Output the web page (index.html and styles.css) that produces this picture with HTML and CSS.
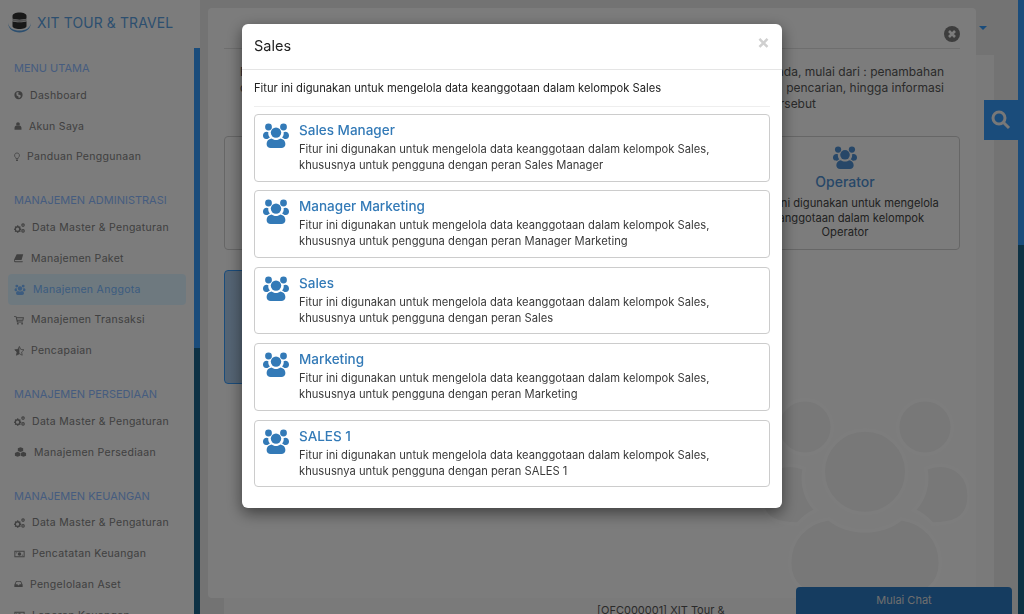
FILE: index.html
```html
<!DOCTYPE html>
<html lang="en">
<head>
    <meta charset="UTF-8">
    <meta name="viewport" content="width=device-width, initial-scale=1.0">
    <title>XIT Tour &amp; Travel</title>
    <link rel="stylesheet" href="styles.css">
</head>
<body>
    <svg class="sprite" width="0" height="0">
        <symbol id="i-users" viewBox="0 0 26 26">
            <circle cx="5.5" cy="5" r="3.4"/>
            <circle cx="20.5" cy="5" r="3.4"/>
            <circle cx="13" cy="10.6" r="5.2"/>
            <path d="M0 13.6c0-2.400 1.600-3.800 3.600-3.800 .7 0 1.300.2 1.800.4-.4 1.700.1 3.900 1.500 5.200-1 .4-1.700 1-2.300 1.700C2.200 17.100 0 16.600 0 13.600z"/>
            <path d="M26 13.600c0-2.400-1.600-3.800-3.600-3.800-.7 0-1.300.2-1.800.4.4 1.700-.1 3.900-1.500 5.200 1 .4 1.700 1 2.300 1.700 2.400-.0 4.600-.5 4.600-3.500z"/>
            <path d="M8.500 16.500c1.100.9 2.800 1.500 4.500 1.500s3.400-.6 4.500-1.500c3 .4 4.900 2.700 4.900 5.500 0 2.500-1.800 4-4 4H7.600c-2.200 0-4-1.500-4-4 0-2.800 1.900-5.100 4.900-5.500z"/>
        </symbol>
        <symbol id="i-globe" viewBox="0 0 12 12">
            <path fill-rule="evenodd" d="M6 .5a5.500 5.500 0 1 0 0 11 5.500 5.500 0 0 0 0-11zM3 3l2.500-1 1 1.200L5 4.500l1.500 1.200 2 .3.5 2-2 2-1-.5V8L3.500 6.500z"/>
        </symbol>
        <symbol id="i-user" viewBox="0 0 12 12">
            <circle cx="6" cy="3" r="2.800"/>
            <path d="M.8 11.800V9c0-2.200 1.400-3.400 3-3.600.6.400 1.400.7 2.200.7s1.600-.3 2.200-.7c1.600.2 3 1.400 3 3.600v2.800z"/>
        </symbol>
        <symbol id="i-bulb" viewBox="0 0 8 12">
            <path fill="none" stroke="currentColor" d="M4 .6a3.300 3.300 0 0 0-2 5.900c.5.500.6 1 .6 1.600h2.800c0-.6.100-1.100.6-1.600A3.300 3.300 0 0 0 4 .6z"/>
            <path d="M2.800 9.200h2.400v2.200H2.800z"/>
        </symbol>
        <symbol id="i-cogs" viewBox="0 0 14 12">
            <path fill-rule="evenodd" d="M4.500 2.500l1 .2.300 1 1 .5.900-.4.800.9-.5.900.4 1 1 .3v1.200l-1 .3-.4 1 .5.900-.8.800-.9-.4-1 .4-.3 1H3.900l-.3-1-1-.4-.9.400-.8-.8.5-.9-.4-1-1-.3V6.900l1-.3.400-1-.5-.9.800-.9.900.4 1-.5.300-1zM4.500 5.500a2 2 0 1 0 0 4 2 2 0 0 0 0-4z"/>
            <path fill-rule="evenodd" d="M11.500 0a2.300 2.300 0 1 0 0 4.600 2.300 2.300 0 0 0 0-4.600zm0 1.400a.9.900 0 1 1 0 1.800.9.900 0 0 1 0-1.800z"/>
            <path fill-rule="evenodd" d="M11.500 7.400a2.300 2.300 0 1 0 0 4.600 2.300 2.300 0 0 0 0-4.600zm0 1.400a.9.900 0 1 1 0 1.800.9.900 0 0 1 0-1.800z"/>
        </symbol>
        <symbol id="i-book" viewBox="0 0 13 12">
            <path d="M3.500 1H12l-2.200 7.600H1.800C1 8.600.8 9.200 1 9.700c.1.400.5.600 1 .6h8.600l.8-.3-.4 1.500H2c-1.200 0-2-.8-2-2 0-.5 0-.9.200-1.400z"/>
        </symbol>
        <symbol id="i-cart" viewBox="0 0 13 12">
            <path fill-rule="evenodd" d="M0 1h3l.4 1.400H13l-1 4.600H4.700l.2 1H11.500v1.200H3.800L2.200 2.200H0zM3.700 3.600l.7 2.200h6.600l.5-2.200z"/>
            <circle cx="5" cy="10.800" r="1.100"/>
            <circle cx="10.500" cy="10.800" r="1.100"/>
        </symbol>
        <symbol id="i-star" viewBox="0 0 13 12">
            <path d="M7 0l1.800 3.900 4.200.5-3.100 2.900.8 4.200L7 9.500 3.200 11.500l.8-4.200L1 4.400l4.200-.5z" fill="none" stroke="currentColor"/>
            <path d="M7 0v9.500L3.200 11.500l.8-4.200L1 4.400l4.200-.5z"/>
        </symbol>
        <symbol id="i-cubes" viewBox="0 0 14 12">
            <path d="M7 .3l3.200 1.300v3.200L7 6.100 3.800 4.800V1.600z"/>
            <path d="M3.500 5.800l3.200 1.300v3.300L3.500 11.700.3 10.400V7.100z"/>
            <path d="M10.500 5.800l3.200 1.300v3.300l-3.200 1.300-3.200-1.300V7.100z"/>
        </symbol>
        <symbol id="i-money" viewBox="0 0 14 12">
            <path fill-rule="evenodd" d="M.5 2h13v8H.5zm1.200 1.200v5.600h10.600V3.200z"/>
            <circle cx="7" cy="6" r="2.200"/>
            <path d="M2.500 4h1.500v1H2.500zM10 7h1.500v1H10z"/>
        </symbol>
        <symbol id="i-inbox" viewBox="0 0 13 12">
            <path fill-rule="evenodd" d="M3 1.500h7L12.500 7v3.500H.5V7zm.8 1.200L2.200 6.500h2.900l.6 1.200h1.600l.6-1.200h2.900L9.200 2.700z"/>
        </symbol>
    </svg>

    <div class="page">
        <aside class="sidebar">
            <div class="brand">
                <svg class="brand-logo" viewBox="0 0 23 21">
                    <path class="brand-arc" d="M0 11c.5 6 5 9.500 11.500 9.500S22.500 17 23 11c-1 5-5 7.500-11.500 7.500S1 16 0 11z"/>
                    <path class="brand-dark" d="M4.500 4c0-2.200 3-3.500 7-3.500s7 1.300 7 3.500v2.500c-2 1.500-12 1.500-14 0z"/>
                    <path class="brand-light" d="M4.500 6.800c2 1.500 12 1.500 14 0v2c-2 1.500-12 1.500-14 0z"/>
                    <path class="brand-dark" d="M4.500 9.200c2 1.500 12 1.500 14 0V14c0 2-3 3-7 3s-7-1-7-3z"/>
                </svg>
                <span class="brand-name">XIT TOUR &amp; TRAVEL</span>
            </div>
            <div class="sidebar-body">
                <nav class="menu">
                    <h4 class="menu-title">MENU UTAMA</h4>
                    <a class="menu-item"><svg class="ic ic-9"><use href="#i-globe"/></svg>Dashboard</a>
                    <a class="menu-item"><svg class="ic ic-8"><use href="#i-user"/></svg>Akun Saya</a>
                    <a class="menu-item"><svg class="ic ic-6"><use href="#i-bulb"/></svg>Panduan Penggunaan</a>

                    <h4 class="menu-title">MANAJEMEN ADMINISTRASI</h4>
                    <a class="menu-item"><svg class="ic ic-11"><use href="#i-cogs"/></svg>Data Master &amp; Pengaturan</a>
                    <a class="menu-item"><svg class="ic ic-10"><use href="#i-book"/></svg>Manajemen Paket</a>
                    <a class="menu-item active"><svg class="ic ic-11"><use href="#i-users"/></svg>Manajemen Anggota</a>
                    <a class="menu-item"><svg class="ic ic-10"><use href="#i-cart"/></svg>Manajemen Transaksi</a>
                    <a class="menu-item"><svg class="ic ic-10"><use href="#i-star"/></svg>Pencapaian</a>

                    <h4 class="menu-title">MANAJEMEN PERSEDIAAN</h4>
                    <a class="menu-item"><svg class="ic ic-11"><use href="#i-cogs"/></svg>Data Master &amp; Pengaturan</a>
                    <a class="menu-item"><svg class="ic ic-13"><use href="#i-cubes"/></svg>Manajemen Persediaan</a>

                    <h4 class="menu-title">MANAJEMEN KEUANGAN</h4>
                    <a class="menu-item"><svg class="ic ic-11"><use href="#i-cogs"/></svg>Data Master &amp; Pengaturan</a>
                    <a class="menu-item"><svg class="ic ic-11"><use href="#i-money"/></svg>Pencatatan Keuangan</a>
                    <a class="menu-item"><svg class="ic ic-9"><use href="#i-inbox"/></svg>Pengelolaan Aset</a>
                    <a class="menu-item"><svg class="ic ic-11"><use href="#i-money"/></svg>Laporan Keuangan</a>
                </nav>
                <div class="strip"></div>
            </div>
        </aside>

        <main class="content">
            <div class="caret-row"><span class="caret"></span></div>
            <section class="back-card">
                <span class="back-label">[OFC000001] XIT Tour &amp;</span>
            </section>
        </main>
        <div class="strip-right"></div>
    </div>

    <section class="panel">
        <header class="panel-head">
            <svg class="panel-close" viewBox="0 0 16 16">
                <circle cx="8" cy="8" r="8"/>
                <path d="M5 5l6 6M11 5l-6 6"/>
            </svg>
        </header>
        <div class="intro">
            <p class="intro-line"><span>F</span><span>ada, mulai dari : penambahan</span></p>
            <p class="intro-line"><span>d</span><span>, pencarian, hingga informasi</span></p>
            <p class="intro-line intro-last"><span></span><span>tersebut</span></p>
        </div>
        <div class="group-grid">
            <div class="group-card"></div>
            <div class="group-card"></div>
            <div class="group-card">
                <svg class="group-icon"><use href="#i-users"/></svg>
                <h3>Operator</h3>
                <p>Fitur ini digunakan untuk mengelola keanggotaan dalam kelompok Operator</p>
            </div>
            <div class="group-card selected"></div>
        </div>
        <svg class="ghost-icon"><use href="#i-users"/></svg>
    </section>

    <button class="search-btn">
        <svg viewBox="0 0 20 20"><circle cx="8" cy="8" r="6"/><path d="M12.500 12.500L18 18"/></svg>
    </button>
    <div class="chat-btn">Mulai Chat</div>

    <div class="overlay">
        <div class="modal">
            <div class="modal-head">
                <h2>Sales</h2>
                <span class="modal-x">×</span>
            </div>
            <div class="modal-body">
                <p class="modal-lead">Fitur ini digunakan untuk mengelola data keanggotaan dalam kelompok Sales</p>
                <div class="role-list">
                    <a class="role">
                        <svg class="role-icon"><use href="#i-users"/></svg>
                        <div>
                            <h3>Sales Manager</h3>
                            <p>Fitur ini digunakan untuk mengelola data keanggotaan dalam kelompok Sales, khususnya untuk pengguna dengan peran Sales Manager</p>
                        </div>
                    </a>
                    <a class="role">
                        <svg class="role-icon"><use href="#i-users"/></svg>
                        <div>
                            <h3>Manager Marketing</h3>
                            <p>Fitur ini digunakan untuk mengelola data keanggotaan dalam kelompok Sales, khususnya untuk pengguna dengan peran Manager Marketing</p>
                        </div>
                    </a>
                    <a class="role">
                        <svg class="role-icon"><use href="#i-users"/></svg>
                        <div>
                            <h3>Sales</h3>
                            <p>Fitur ini digunakan untuk mengelola data keanggotaan dalam kelompok Sales, khususnya untuk pengguna dengan peran Sales</p>
                        </div>
                    </a>
                    <a class="role">
                        <svg class="role-icon"><use href="#i-users"/></svg>
                        <div>
                            <h3>Marketing</h3>
                            <p>Fitur ini digunakan untuk mengelola data keanggotaan dalam kelompok Sales, khususnya untuk pengguna dengan peran Marketing</p>
                        </div>
                    </a>
                    <a class="role">
                        <svg class="role-icon"><use href="#i-users"/></svg>
                        <div>
                            <h3>SALES 1</h3>
                            <p>Fitur ini digunakan untuk mengelola data keanggotaan dalam kelompok Sales, khususnya untuk pengguna dengan peran SALES 1</p>
                        </div>
                    </a>
                </div>
            </div>
        </div>
    </div>
</body>
</html>
```

FILE: styles.css
```css
* {
    box-sizing: border-box;
}
html, body {
    margin: 0;
    height: 614px;
    overflow: hidden;
}
body {
    font-family: Inter, "Open Sans", sans-serif;
    font-size: 11px;
    color: #333;
    background: #e6e6e6;
    position: relative;
}
h2, h3, h4, p {
    margin: 0;
    font-weight: 400;
}
.sprite {
    display: block;
    height: 0;
}
.page {
    display: flex;
    height: 614px;
}

/* sidebar */
.sidebar {
    width: 200px;
    flex: none;
    background: #f8f8f8;
    display: flex;
    flex-direction: column;
}
.brand {
    height: 48px;
    display: flex;
    align-items: center;
    padding: 0 0 3px 8px;
    gap: 6px;
}
.brand-logo {
    width: 23px;
    height: 21px;
}
.brand-arc {
    fill: #5a9fdf;
}
.brand-dark {
    fill: #303030;
}
.brand-light {
    fill: #a0a0a0;
}
.brand-name {
    font-size: 13.9px;
    color: #5a9fdf;
    letter-spacing: 0.15px;
}
.sidebar-body {
    flex: 1;
    display: flex;
    min-height: 0;
}
.menu {
    width: 194px;
    padding: 12px 8px 0;
    overflow: hidden;
}
.strip {
    width: 6px;
    background: linear-gradient(#3598f6 300px, #1a6288 300px);
}
.strip-right {
    width: 6px;
    flex: none;
    background: linear-gradient(#3598f6 245px, #1a6288 245px);
}
.menu-title {
    height: 16px;
    line-height: 16px;
    margin: 20px 0 4px 6px;
    font-size: 11px;
    color: #8cb8ff;
}
.menu-title:first-child {
    margin-top: 0;
}
.menu-item {
    display: flex;
    align-items: center;
    height: 30.75px;
    padding-left: 6px;
    gap: 7px;
    font-size: 10.5px;
    color: #808080;
    fill: #808080;
    border-radius: 4px;
    letter-spacing: 0.3px;
    white-space: nowrap;
}
.menu-item.active {
    background: #dcf2ff;
    color: #78b8ff;
    fill: #78b8ff;
}
.menu-item.active .ic {
    height: 11px;
    width: 12px;
}
.ic {
    height: 10px;
    flex: none;
}
.ic-6 { width: 6px; }
.ic-8 { width: 8px; }
.ic-9 { width: 9px; }
.ic-10 { width: 10px; }
.ic-11 { width: 11px; }
.ic-13 { width: 13px; }

/* page behind the panel */
.content {
    flex: 1;
    padding-left: 24px;
    min-width: 0;
}
.caret-row {
    height: 55px;
    padding: 26px 0 0 755px;
}
.caret {
    display: block;
    width: 0;
    border: 4px solid transparent;
    border-top: 4px solid #3598f6;
}
.back-card {
    width: 770px;
    height: 565px;
    background: #f4f4f4;
    display: flex;
    align-items: flex-end;
    padding: 0 0 2px 373px;
}
.back-label {
    font-size: 11px;
    line-height: 16px;
    color: #555;
}

/* panel behind the modal */
.panel {
    position: absolute;
    left: 208px;
    top: 8px;
    width: 768px;
    height: 590px;
    padding: 0 16px;
    background: #f9f9f9;
    border-radius: 4px;
    overflow: hidden;
}
.panel-head {
    height: 41px;
    border-bottom: 1px solid #ddd;
    display: flex;
    justify-content: flex-end;
    align-items: flex-start;
    padding-top: 18px;
}
.panel-close {
    width: 16px;
    height: 16px;
}
.panel-close circle {
    fill: #7a7a7a;
}
.panel-close path {
    stroke: #f9f9f9;
    stroke-width: 2.6;
}
.intro {
    margin-top: 15px;
    padding-left: 16px;
    font-size: 12px;
    line-height: 16px;
    color: #555;
}
.intro-line {
    display: flex;
    justify-content: space-between;
    padding-right: 16px;
}
.intro-last {
    padding-right: 144px;
}
.group-grid {
    display: grid;
    grid-template-columns: repeat(3, 230px);
    grid-auto-rows: 114px;
    gap: 20px 23px;
    margin-top: 24px;
}
.group-card {
    border: 1px solid #ccc;
    border-radius: 4px;
    text-align: center;
    padding: 8px 14px 0;
    font-size: 11.200px;
    line-height: 14.500px;
    color: #444;
}
.group-card.selected {
    border-color: #3598f6;
    background: linear-gradient(90deg, #a8c8e8, #dfe8f2);
}
.group-icon {
    width: 26px;
    height: 24px;
    fill: #4f8fd0;
    display: block;
    margin: 0 auto;
}
.group-card h3 {
    font-size: 14px;
    font-weight: 500;
    line-height: 20px;
    margin: 3px 0 4px;
    color: #4f8fd0;
}
.ghost-icon {
    position: absolute;
    left: 553px;
    top: 379px;
    width: 208px;
    height: 208px;
    fill: #f0f0f0;
    stroke: #fbfbfb;
    stroke-width: 0.4;
}
.search-btn {
    position: absolute;
    left: 984px;
    top: 100px;
    width: 34px;
    height: 40px;
    border: 0;
    padding: 0 0 0 7px;
    background: #3598f6;
}
.search-btn svg {
    display: block;
    width: 20px;
    height: 20px;
    fill: none;
    stroke: #f0f0f0;
    stroke-width: 3;
}
.chat-btn {
    position: absolute;
    left: 796px;
    top: 587px;
    width: 216px;
    height: 27px;
    background: #2a78c0;
    border-radius: 4px 4px 0 0;
    color: #ddd;
    font-size: 11px;
    line-height: 27px;
    text-align: center;
}

/* modal */
.overlay {
    position: fixed;
    inset: 0;
    background: rgba(0, 0, 0, 0.5);
    padding: 24px 242px 0;
}
.modal {
    height: 484px;
    background: #fff;
    border-radius: 6px;
    box-shadow: 0 5px 15px rgba(0, 0, 0, 0.5);
}
.modal-head {
    height: 46px;
    padding: 0 12px 2px;
    display: flex;
    align-items: center;
    justify-content: space-between;
    border-bottom: 1px solid #e5e5e5;
}
.modal-head h2 {
    font-size: 14.500px;
    color: #222;
}
.modal-x {
    font-size: 19px;
    font-weight: 700;
    color: #d0d0d0;
    margin-bottom: 6px;
}
.modal-body {
    padding: 0 12px;
}
.modal-lead {
    height: 37px;
    line-height: 37px;
    border-bottom: 1px solid #eee;
    font-size: 11.200px;
    color: #222;
    margin-bottom: 7px;
}
.role-list {
    display: flex;
    flex-direction: column;
    gap: 8.900px;
}
.role {
    display: flex;
    height: 67.500px;
    padding: 7px 30px 0 8px;
    gap: 10px;
    border: 1px solid #ccc;
    border-radius: 4px;
}
.role-icon {
    width: 26px;
    height: 26px;
    flex: none;
    fill: #337ab7;
}
.role h3 {
    font-size: 13.500px;
    line-height: 16px;
    color: #337ab7;
    font-weight: 500;
    margin-bottom: 3px;
}
.role p {
    font-size: 11.200px;
    line-height: 16px;
    color: #3a3a3a;
}
```
